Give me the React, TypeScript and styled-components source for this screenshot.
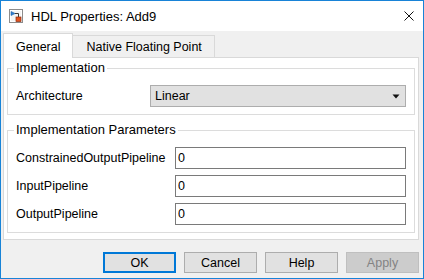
import styled, { createGlobalStyle } from "styled-components";

const GlobalStyle = createGlobalStyle`
  html, body {
    margin: 0;
    padding: 0;
    background: #ffffff;
  }
  body {
    font-family: "Liberation Sans", Arial, sans-serif;
    font-size: 12.5px;
    color: #000000;
  }
`;

function BlockIcon() {
  return (
    <svg width="14" height="14" viewBox="0 0 14 14">
      <rect x="0.5" y="0.5" width="13" height="13" fill="#f4f4f4" stroke="#8c8c8c" />
      <rect x="1.5" y="1.5" width="11" height="11" fill="none" stroke="#ffffff" />
      <path d="M2 2.5 L2 6.5 L6 4.5 Z" fill="#2f7fd0" stroke="#1c5fa8" strokeWidth="0.6" />
      <path d="M6 4.5 H9.5 V8" fill="none" stroke="#3a3a3a" strokeWidth="1" />
      <rect x="7" y="8" width="5" height="4.5" fill="#e2531f" stroke="#8a2a0c" strokeWidth="0.7" />
    </svg>
  );
}

function CloseIcon() {
  return (
    <svg width="10" height="10" viewBox="0 0 10 10">
      <path d="M0.5 0.5 L9.5 9.5 M9.5 0.5 L0.5 9.5" stroke="#111111" strokeWidth="1" />
    </svg>
  );
}

function ArrowIcon() {
  return (
    <svg width="8" height="5" viewBox="0 0 8 5">
      <path d="M0.5 0.5 H7.5 L4 4.5 Z" fill="#111111" />
    </svg>
  );
}

export default function App() {
  return (
    <>
      <GlobalStyle />
      <Window>
        <TitleBar>
          <BlockIcon />
          <Title>HDL Properties: Add9</Title>
          <CloseButton>
            <CloseIcon />
          </CloseButton>
        </TitleBar>
        <Body>
          <TabStrip>
            <Tab active>General</Tab>
            <Tab>Native Floating Point</Tab>
          </TabStrip>
          <Panel>
            <Group>
              <Legend>Implementation</Legend>
              <Rows labelWidth={134}>
                <Label>Architecture</Label>
                <Dropdown>
                  <span>Linear</span>
                  <ArrowIcon />
                </Dropdown>
              </Rows>
            </Group>
            <Group second>
              <Legend>Implementation Parameters</Legend>
              <Rows labelWidth={159}>
                <Label>ConstrainedOutputPipeline</Label>
                <Field defaultValue="0" />
                <Label>InputPipeline</Label>
                <Field defaultValue="0" />
                <Label>OutputPipeline</Label>
                <Field defaultValue="0" />
              </Rows>
            </Group>
          </Panel>
          <Footer>
            <Button primary>OK</Button>
            <Button>Cancel</Button>
            <Button>Help</Button>
            <Button disabled>Apply</Button>
          </Footer>
        </Body>
      </Window>
    </>
  );
}

const Window = styled.div`
  width: 424px;
  height: 279px;
  box-sizing: border-box;
  border: 1px solid #1883d7;
  display: flex;
  flex-direction: column;
  background: #f0f0f0;
`;

const TitleBar = styled.div`
  height: 30px;
  flex: none;
  background: #ffffff;
  display: flex;
  align-items: center;
  padding-left: 8px;
  gap: 8px;
`;

const Title = styled.div`
  flex: 1;
  line-height: 16px;
  padding-top: 1px;
  font-size: 13px;
`;

const CloseButton = styled.div`
  width: 10px;
  height: 10px;
  margin-right: 9px;
  display: flex;
`;

const Body = styled.div`
  flex: 1;
  display: flex;
  flex-direction: column;
  padding: 2px 4px 0 2px;
`;

const TabStrip = styled.div`
  display: flex;
  align-items: flex-end;
  height: 24px;
`;

const Tab = styled.div<{ active?: boolean }>`
  box-sizing: border-box;
  height: ${(p) => (p.active ? "25px" : "22px")};
  margin-bottom: ${(p) => (p.active ? "-1px" : "0")};
  margin-left: ${(p) => (p.active ? "0" : "-1px")};
  padding: ${(p) => (p.active ? "1px 12px 0 12px" : "0 12px 0 13px")};
  display: flex;
  align-items: center;
  border: 1px solid #d9d9d9;
  border-bottom: none;
  background: ${(p) => (p.active ? "#ffffff" : "#f0f0f0")};
  position: relative;
  z-index: ${(p) => (p.active ? 2 : 0)};
  white-space: nowrap;
`;

const Panel = styled.div`
  box-sizing: border-box;
  height: 183px;
  border: 1px solid #d9d9d9;
  background: #ffffff;
  padding: 2px 3px 6px 3px;
  display: flex;
  flex-direction: column;
`;

const Group = styled.fieldset<{ second?: boolean }>`
  margin: ${(p) => (p.second ? "7px 0 0" : "0")};
  padding: 9px 8px 7px 8px;
  border: 1px solid #dcdcdc;
  min-inline-size: 0;
`;

const Legend = styled.legend`
  padding: 0 2px;
  margin-left: -2px;
  line-height: 16px;
  font-size: 13px;
`;

const Rows = styled.div<{ labelWidth: number }>`
  display: grid;
  grid-template-columns: ${(p) => p.labelWidth}px 1fr;
  grid-auto-rows: 22px;
  row-gap: 6px;
  align-items: center;
`;

const Label = styled.div`
  white-space: nowrap;
`;

const Dropdown = styled.div`
  box-sizing: border-box;
  height: 22px;
  border: 1px solid #adadad;
  background: #e1e1e1;
  display: flex;
  align-items: center;
  justify-content: space-between;
  padding: 0 5px 0 4px;
`;

const Field = styled.input`
  box-sizing: border-box;
  height: 22px;
  width: 100%;
  margin: 0;
  border: 1px solid #7a7a7a;
  padding: 0 2px;
  font: inherit;
  color: #000000;
  background: #ffffff;
  outline: none;
`;

const Footer = styled.div`
  display: flex;
  justify-content: flex-end;
  gap: 8px;
  padding-top: 12px;
`;

const Button = styled.button<{ primary?: boolean }>`
  box-sizing: border-box;
  width: 73px;
  height: 21px;
  margin: 0;
  padding: 0;
  font: inherit;
  color: ${(p) => (p.disabled ? "#838383" : "#000000")};
  background: ${(p) => (p.disabled ? "#cccccc" : "#e1e1e1")};
  border: ${(p) =>
    p.primary ? "2px solid #0078d7" : p.disabled ? "1px solid #bfbfbf" : "1px solid #adadad"};
`;
